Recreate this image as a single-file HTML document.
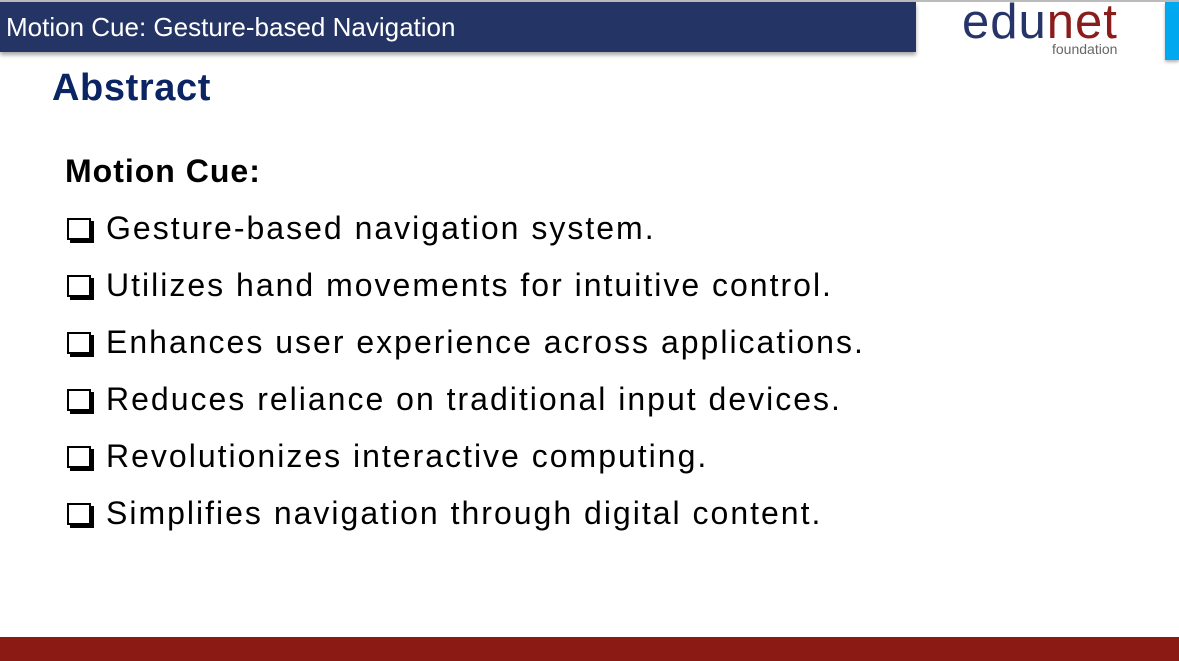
<!DOCTYPE html>
<html><head><meta charset="utf-8"><style>
body{margin:0;width:1179px;height:661px;position:relative;background:#fff;overflow:hidden;font-family:"Liberation Sans",sans-serif}
.top{position:absolute;left:0;top:0;width:1179px;height:2px;background:#bbb}
.bar{position:absolute;left:0;top:2px;width:916px;height:50px;background:#243465;box-shadow:0 3px 4px rgba(0,0,0,.35)}
.bar span{position:absolute;left:6px;top:10px;color:#fff;font-size:26px}
.blue{position:absolute;left:1165px;top:2px;width:14px;height:58px;background:#00a8f0;box-shadow:0 2px 3px rgba(0,0,0,.3)}
.logo{position:absolute;left:962px;top:-6px;font-size:49px;color:#27346a;letter-spacing:1px}
.logo b{font-weight:normal;color:#8b1c1c}
.found{position:absolute;left:1052px;top:41px;font-size:14px;color:#666}
h1{position:absolute;left:52px;top:67px;margin:0;font-size:38px;color:#0b2463;font-weight:bold;letter-spacing:0.6px}
.mc{position:absolute;left:65px;top:153px;font-size:32px;font-weight:bold;color:#000;letter-spacing:1px}
.it{position:absolute;left:67px;font-size:32px;color:#000;white-space:nowrap;letter-spacing:2px}
.cb{display:inline-block;width:20px;height:18px;border:2px solid #000;box-shadow:3px 3px 0 #000;margin-right:15px;vertical-align:-1px}
.foot{position:absolute;left:0;top:637px;width:1179px;height:24px;background:#8b1a14}
</style></head><body>
<div class="top"></div>
<div class="bar"><span>Motion Cue: Gesture-based Navigation</span></div>
<div class="blue"></div>
<div class="logo">edu<b>net</b></div>
<div class="found">foundation</div>
<h1>Abstract</h1>
<div class="mc">Motion Cue:</div>
<div class="it" style="top:210px"><span class="cb"></span>Gesture-based navigation system.</div>
<div class="it" style="top:267px"><span class="cb"></span>Utilizes hand movements for intuitive control.</div>
<div class="it" style="top:324px"><span class="cb"></span>Enhances user experience across applications.</div>
<div class="it" style="top:381px"><span class="cb"></span>Reduces reliance on traditional input devices.</div>
<div class="it" style="top:438px"><span class="cb"></span>Revolutionizes interactive computing.</div>
<div class="it" style="top:495px"><span class="cb"></span>Simplifies navigation through digital content.</div>
<div class="foot"></div>
</body></html>
